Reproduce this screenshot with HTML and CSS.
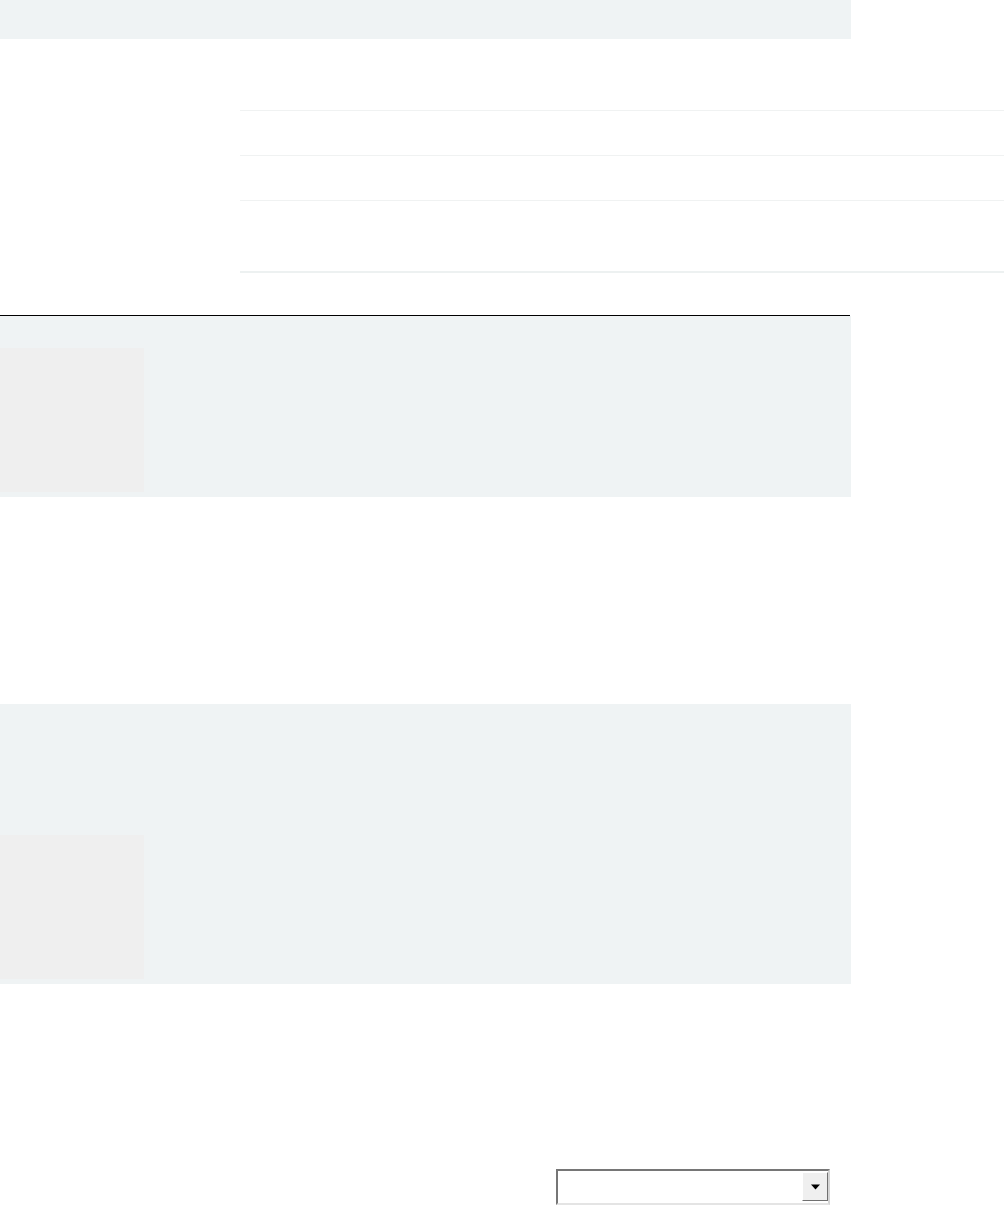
FILE: index.html
```html
<!DOCTYPE html>
<html lang="en">
<head>
<meta charset="utf-8">
<title>Page</title>
<link rel="stylesheet" href="styles.css">
</head>
<body>
<div class="page">
  <div class="top-band"></div>
  <div class="list">
    <div class="row"></div>
    <div class="row"></div>
    <div class="row row-tall"></div>
    <div class="row-end"></div>
  </div>
  <div class="rule"></div>
  <section class="panel panel-one">
    <div class="thumb"></div>
  </section>
  <section class="panel panel-two">
    <div class="thumb"></div>
  </section>
  <div class="select-wrap">
    <div class="select">
      <span class="select-value"></span>
      <span class="select-btn">
        <svg width="9" height="6" viewBox="0 0 9 6"><path d="M0 0.5h9L4.5 5.5z" fill="#000"/></svg>
      </span>
    </div>
  </div>
</div>
</body>
</html>
```

FILE: styles.css
```css
html, body {
  margin: 0;
  padding: 0;
  background: #ffffff;
  font-family: "Liberation Sans", Arial, sans-serif;
}

.page {
  width: 1004px;
  display: flex;
  flex-direction: column;
}

.top-band {
  width: 851px;
  height: 39px;
  background: #eff3f4;
}

.list {
  margin-top: 71px;
  margin-left: 240px;
  display: flex;
  flex-direction: column;
}

.row {
  height: 44px;
  border-top: 1px solid #f0f2f2;
}

.row-tall {
  height: 70px;
}

.row-end {
  height: 2px;
  background: #edf1f1;
}

.rule {
  margin-top: 42px;
  width: 850px;
  height: 1px;
  background: #000000;
}

.panel {
  width: 851px;
  background: #eff3f4;
  display: flex;
  flex-direction: column;
  padding-bottom: 5px;
}

.panel-one {
  padding-top: 32px;
}

.panel-two {
  margin-top: 207px;
  padding-top: 131px;
}

.thumb {
  width: 144px;
  height: 144px;
  background: #efefef;
}

.select-wrap {
  margin-top: 185px;
  padding-left: 556px;
  display: flex;
}

.select {
  width: 270px;
  height: 32px;
  border-top: 2px solid #767676;
  border-left: 2px solid #767676;
  border-right: 2px solid #d4d4d4;
  border-bottom: 2px solid #e4e4e4;
  background: #ffffff;
  display: flex;
  align-items: stretch;
}

.select-value {
  flex: 1;
}

.select-btn {
  width: 24px;
  margin: 1px 0 2px;
  background: #efefef;
  border-top: 1px solid #ffffff;
  border-left: 1px solid #ffffff;
  border-right: 1px solid #707070;
  border-bottom: 1px solid #707070;
  display: flex;
  align-items: center;
  justify-content: center;
}
```
